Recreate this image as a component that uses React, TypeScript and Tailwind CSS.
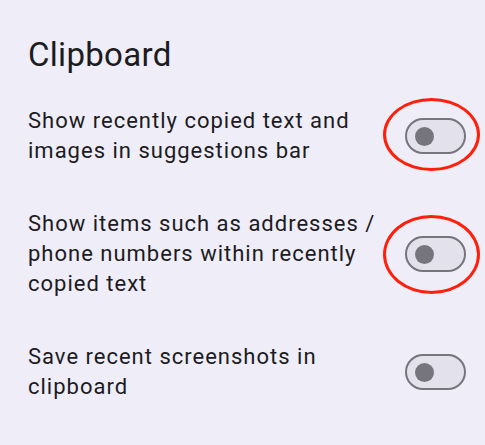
import React from "react";

type Item = { lines: string[]; circled?: "a" | "b" };

const items: Item[] = [
  { lines: ["Show recently copied text and", "images in suggestions bar"], circled: "a" },
  {
    lines: ["Show items such as addresses /", "phone numbers within recently", "copied text"],
    circled: "b",
  },
  { lines: ["Save recent screenshots in", "clipboard"] },
];

function Toggle({ circled }: { circled?: "a" | "b" }) {
  return (
    <div className="relative shrink-0 w-[61px] h-[36px]">
      <div className="w-full h-full rounded-full border-2 border-[#76757d] bg-[#e3e2ec] flex items-center pl-[8px]">
        <div className="w-[19px] h-[19px] rounded-full bg-[#76757d]" />
      </div>
      {/* red annotation ring */}
      {circled === "a" && (
        <div className="absolute left-[-22px] top-[-20px] w-[97px] h-[73px] rounded-[50%] border-[3px] border-[#ff1f0a]" />
      )}
      {circled === "b" && (
        <div className="absolute left-[-22px] top-[-21px] w-[97px] h-[79px] rounded-[50%] border-[3px] border-[#ff1f0a]" />
      )}
    </div>
  );
}

export default function App() {
  return (
    <div
      className="w-[485px] h-[445px] bg-[#eeedf8] text-[#1c1b21] overflow-hidden"
      style={{ fontFamily: "Roboto, 'Open Sans', sans-serif" }}
    >
      <h1 className="pl-[28px] pt-[35px] text-[33px] leading-[40px] font-normal tracking-[0.3px]">
        Clipboard
      </h1>

      <div className="pt-[9.5px]">
        {items.map((it, i) => (
          <div key={i} className="flex items-center pl-[28px] pr-[19px] py-[21.5px]">
            <p className="flex-1 text-[22px] leading-[30px] tracking-[1px]">
              {it.lines.map((l, j) => (
                <React.Fragment key={j}>
                  {l}
                  {j < it.lines.length - 1 && <br />}
                </React.Fragment>
              ))}
            </p>
            <Toggle circled={it.circled} />
          </div>
        ))}
      </div>
    </div>
  );
}
